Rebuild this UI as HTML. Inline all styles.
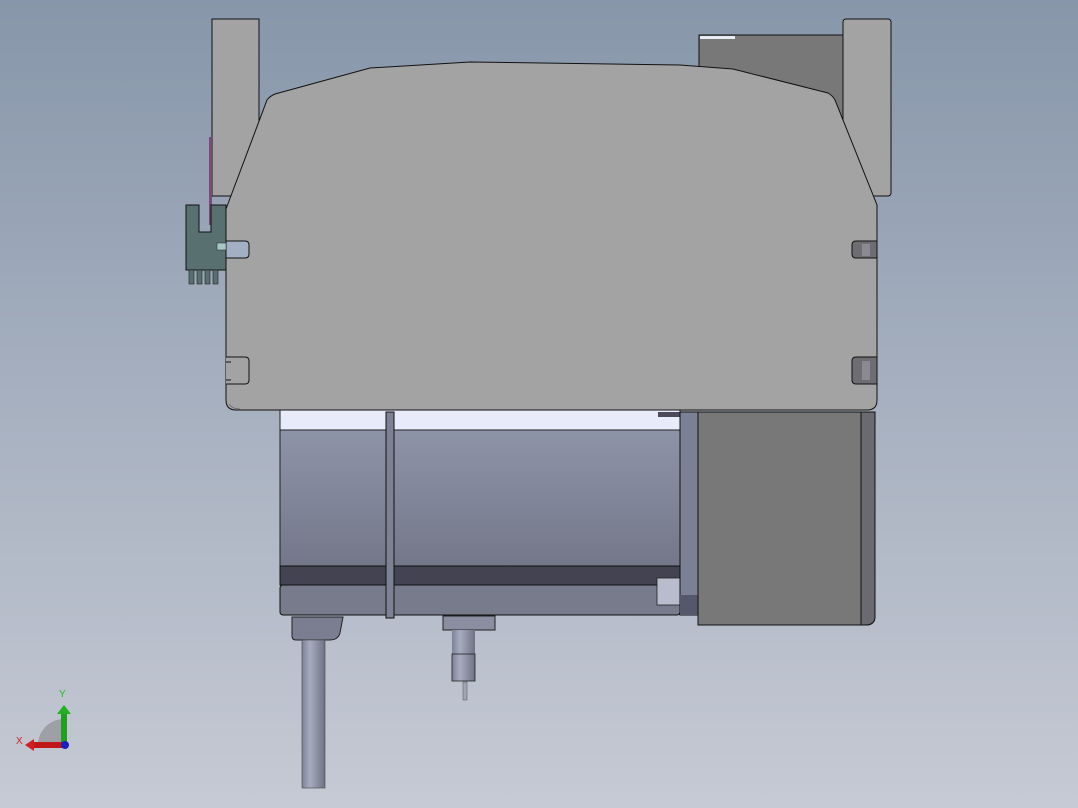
<!DOCTYPE html>
<html><head><style>html,body{margin:0;padding:0;width:1078px;height:808px;overflow:hidden}</style></head>
<body>
<svg width="1078" height="808" viewBox="0 0 1078 808" xmlns="http://www.w3.org/2000/svg" font-family="Liberation Sans, sans-serif">
<defs>
<linearGradient id="bg" x1="0" y1="0" x2="0" y2="1"><stop offset="0" stop-color="#8796aa"/><stop offset="0.55" stop-color="#aab3c2"/><stop offset="1" stop-color="#c6cad4"/></linearGradient>
<linearGradient id="mot" x1="0" y1="0" x2="0" y2="1"><stop offset="0" stop-color="#8e94a8"/><stop offset="1" stop-color="#737789"/></linearGradient>
<linearGradient id="cyl" x1="0" y1="0" x2="1" y2="0"><stop offset="0" stop-color="#7e8296"/><stop offset="0.35" stop-color="#a8acc0"/><stop offset="1" stop-color="#6e7284"/></linearGradient>
</defs>
<rect width="1078" height="808" fill="url(#bg)"/>
<!-- back posts -->
<rect x="699" y="35" width="145" height="200" fill="#787878" stroke="#111" stroke-width="1"/>
<rect x="700" y="36" width="35" height="3" fill="#e8ecf4"/>
<rect x="212" y="19" width="47" height="177" fill="#a3a3a3" stroke="#111" stroke-width="1"/>
<rect x="843" y="19" width="48" height="177" rx="3" fill="#a3a3a3" stroke="#111" stroke-width="1"/>
<rect x="209" y="137" width="3" height="88" fill="#7a4a78"/>
<!-- motor -->
<rect x="280" y="410" width="400" height="22" fill="#e8ecfa" stroke="#222" stroke-width="1"/>
<rect x="280" y="430" width="400" height="136" fill="url(#mot)" stroke="#222" stroke-width="1"/>
<rect x="280" y="566" width="400" height="19" fill="#434352" stroke="#111" stroke-width="1"/>
<rect x="280" y="585" width="400" height="30" rx="3" fill="#777b8c" stroke="#111" stroke-width="1"/>
<rect x="386" y="412" width="8" height="206" fill="#7d8194" stroke="#111" stroke-width="1"/>
<rect x="658" y="412" width="22" height="5" fill="#4a4a58"/>
<rect x="657" y="578" width="23" height="27" fill="#b8bccc" stroke="#222" stroke-width="0.8"/>
<rect x="680" y="412" width="19" height="203" fill="#7c8094" stroke="#111" stroke-width="1"/>
<rect x="680" y="595" width="19" height="20" fill="#55586a"/>
<rect x="698" y="412" width="163" height="213" fill="#787878" stroke="#111" stroke-width="1"/>
<path d="M861 412 L875 412 L875 618 Q874 625 866 625 L861 625 Z" fill="#6a6a70" stroke="#111" stroke-width="1"/>
<!-- cable -->
<path d="M292 617 L343 617 L340 633 Q338 640 330 640 L296 640 Q292 640 292 636 Z" fill="#7a7e90" stroke="#222" stroke-width="1"/>
<rect x="302" y="640" width="23" height="148" fill="url(#cyl)" stroke="#444" stroke-width="0.6"/>
<!-- shaft -->
<rect x="443" y="616" width="52" height="14" fill="#8a8ea0" stroke="#222" stroke-width="1"/>
<rect x="452" y="630" width="23" height="24" fill="url(#cyl)"/>
<rect x="452" y="654" width="23" height="27" fill="url(#cyl)" stroke="#222" stroke-width="0.8"/>
<rect x="463" y="682" width="4" height="18" fill="#a0a4b4" stroke="#555" stroke-width="0.5"/>
<!-- main body -->
<path d="M226 209 L267 100 Q270 96 275 94 L370 68 L470 62 L680 65 L733 69 L828 93 Q833 96 835 100 L877 205 L877 400 Q877 410 867 410 L236 410 Q226 410 226 400 Z" fill="#a3a3a3" stroke="#111" stroke-width="1"/>
<path d="M229 404 Q232 409 240 409" fill="none" stroke="#555" stroke-width="0.6"/>
<!-- slots left -->
<path d="M226 241 L245 241 Q249 241 249 245 L249 254 Q249 258 245 258 L226 258" fill="#a3b0c4" stroke="#111" stroke-width="1"/>
<path d="M226 357 L245 357 Q249 357 249 361 L249 380 Q249 384 245 384 L226 384" fill="#a3a3a3" stroke="#111" stroke-width="1"/>
<path d="M226 362 L231 362 M226 380 L231 380" stroke="#111"/>
<!-- slots right -->
<path d="M877 241 L856 241 Q852 241 852 245 L852 254 Q852 258 856 258 L877 258 Z" fill="#6e6e72" stroke="#111" stroke-width="1"/>
<path d="M877 357 L856 357 Q852 357 852 361 L852 380 Q852 384 856 384 L877 384 Z" fill="#6e6e72" stroke="#111" stroke-width="1"/>
<rect x="862" y="244" width="8" height="12" fill="#8a8a90"/>
<rect x="862" y="361" width="8" height="19" fill="#8a8a90"/>
<!-- connector -->
<path d="M186 205 L199 205 L199 232 L211 232 L211 205 L226 205 L226 270 L186 270 Z" fill="#587070" stroke="#111" stroke-width="1"/>
<rect x="217" y="243" width="9" height="7" fill="#a8c8c8" stroke="#222" stroke-width="0.5"/>
<g fill="#587070" stroke="#222" stroke-width="0.6">
<rect x="189" y="270" width="5" height="14"/><rect x="197" y="270" width="5" height="14"/><rect x="205" y="270" width="5" height="14"/><rect x="213" y="270" width="5" height="14"/>
</g>
<!-- axis triad -->
<path d="M38 745 A26 26 0 0 1 64 719 L64 745 Z" fill="#9ea0a6"/>
<rect x="61" y="712" width="6" height="33" fill="#1fa01f"/>
<path d="M57 714 L64 705 L71 714 Z" fill="#22b022"/>
<rect x="32" y="742" width="32" height="6" fill="#c01818"/>
<path d="M34 739 L25 745 L34 751 Z" fill="#d02020"/>
<circle cx="65" cy="745" r="4" fill="#1a20c0"/>
<text x="59" y="697" font-size="10" fill="#20c020">Y</text>
<text x="16" y="744" font-size="10" fill="#d02020">X</text>
</svg>
</body></html>
